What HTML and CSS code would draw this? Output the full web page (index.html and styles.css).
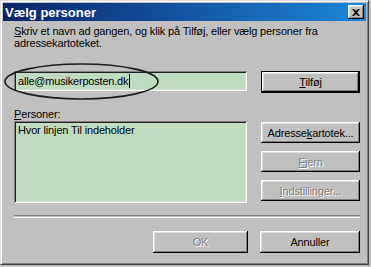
FILE: index.html
```html
<!DOCTYPE html>
<html>
<head>
    <title>Vælg personer</title>
    <link rel="stylesheet" href="styles.css">
</head>
<body>
    <div class="window">
        <div class="titlebar">
            <span class="title">Vælg personer</span>
            <span class="close">
                <svg width="8" height="7" viewBox="0 0 8 7"><path d="M0 0h2l2 2 2-2h2L5 3.5 8 7H6L4 5 2 7H0l3-3.5z" fill="#000"/></svg>
            </span>
        </div>
        <div class="content">
            <p class="intro"><u>S</u>kriv et navn ad gangen, og klik på Tilføj, eller vælg personer fra<br>adressekartoteket.</p>
            <div class="top-row">
                <div class="field input">alle@musikerposten.dk<span class="caret"></span></div>
                <button class="btn default"><u>T</u>ilføj</button>
            </div>
            <div class="mid-row">
                <div class="list-col">
                    <div class="label"><u>P</u>ersoner:</div>
                    <div class="field list">Hvor linjen Til indeholder</div>
                </div>
                <div class="btn-col">
                    <button class="btn">Adresse<u>k</u>artotek...</button>
                    <button class="btn disabled"><u>F</u>jern</button>
                    <button class="btn disabled"><u>I</u>ndstillinger...</button>
                </div>
            </div>
            <div class="separator"></div>
            <div class="footer">
                <button class="btn disabled ok">OK</button>
                <button class="btn cancel">Annuller</button>
            </div>
        </div>
        <svg class="marker" width="157" height="39" viewBox="0 0 157 39">
            <ellipse cx="78.5" cy="19.5" rx="76.5" ry="17.5" fill="none" stroke="#1c1c1c" stroke-width="1.6"/>
        </svg>
    </div>
</body>
</html>
```

FILE: styles.css
```css
html, body {
    margin: 0;
    padding: 0;
}

body {
    background: #c0c0c0;
    font-family: "Liberation Sans", Arial, sans-serif;
    font-size: 11px;
    letter-spacing: -0.15px;
    color: #000;
}

.window {
    position: relative;
    width: 363px;
    height: 259px;
    padding: 2px;
    border: 1px solid;
    border-color: #dfdfdf #404040 #404040 #dfdfdf;
    box-shadow: inset 1px 1px #fff, inset -1px -1px #808080;
    background: #c0c0c0;
    display: flex;
    flex-direction: column;
}

.titlebar {
    height: 18px;
    display: flex;
    align-items: center;
    justify-content: space-between;
    padding: 0 2px 0 2px;
    background: linear-gradient(to right, #0a246a, #1c86d8);
}

.title {
    color: #fff;
    font-weight: bold;
    font-size: 13px;
    letter-spacing: 0;
}

.close {
    width: 16px;
    height: 14px;
    box-sizing: border-box;
    background: #c0c0c0;
    box-shadow: inset -1px -1px #000, inset 1px 1px #fff, inset -2px -2px #808080, inset 2px 2px #dfdfdf;
    display: flex;
    align-items: center;
    justify-content: center;
}

.content {
    padding: 4px 6px 0 11px;
    display: flex;
    flex-direction: column;
}

.intro {
    margin: 0;
    line-height: 12px;
    height: 24px;
}

.field {
    box-sizing: border-box;
    background: #c0dcc0;
    box-shadow: inset 1px 1px #808080, inset -1px -1px #fff, inset 2px 2px #202020, inset -2px -2px #dfdfdf;
}

.top-row {
    display: flex;
    align-items: flex-start;
    margin-top: 22px;
}

.input {
    width: 233px;
    height: 20px;
    padding: 3px 4px;
    line-height: 14px;
    font-size: 11px;
    letter-spacing: -0.2px;
    display: flex;
    align-items: center;
}

.caret {
    width: 1px;
    height: 14px;
    background: #000;
    margin-left: 1px;
}

.btn {
    box-sizing: border-box;
    width: 99px;
    height: 21px;
    padding: 0;
    border: none;
    background: #c0c0c0;
    font-family: inherit;
    font-size: 11px;
    letter-spacing: -0.15px;
    color: #000;
    box-shadow: inset -1px -1px #000, inset 1px 1px #fff, inset -2px -2px #808080, inset 2px 2px #dfdfdf;
}

.btn.default {
    height: 22px;
    margin-left: 14px;
    border: 1px solid #000;
}

.btn.disabled {
    color: #808080;
    text-shadow: 1px 1px #fff;
}

.mid-row {
    display: flex;
    margin-top: 15px;
}

.list-col {
    display: flex;
    flex-direction: column;
}

.label {
    line-height: 12px;
    height: 12px;
}

.list {
    width: 233px;
    height: 82px;
    margin-top: 1px;
    padding: 3px 4px;
}

.btn-col {
    display: flex;
    flex-direction: column;
    gap: 8px;
    margin-left: 14px;
    margin-top: 14px;
}

.separator {
    margin-top: 12px;
    height: 1px;
    border-top: 1px solid #808080;
    border-bottom: 1px solid #fff;
}

.footer {
    display: flex;
    justify-content: flex-end;
    gap: 12px;
    margin-top: 13px;
}

.footer .ok {
    width: 95px;
    height: 22px;
}

.footer .cancel {
    width: 100px;
    height: 22px;
}

.marker {
    position: absolute;
    left: 2px;
    top: 61px;
}
```
